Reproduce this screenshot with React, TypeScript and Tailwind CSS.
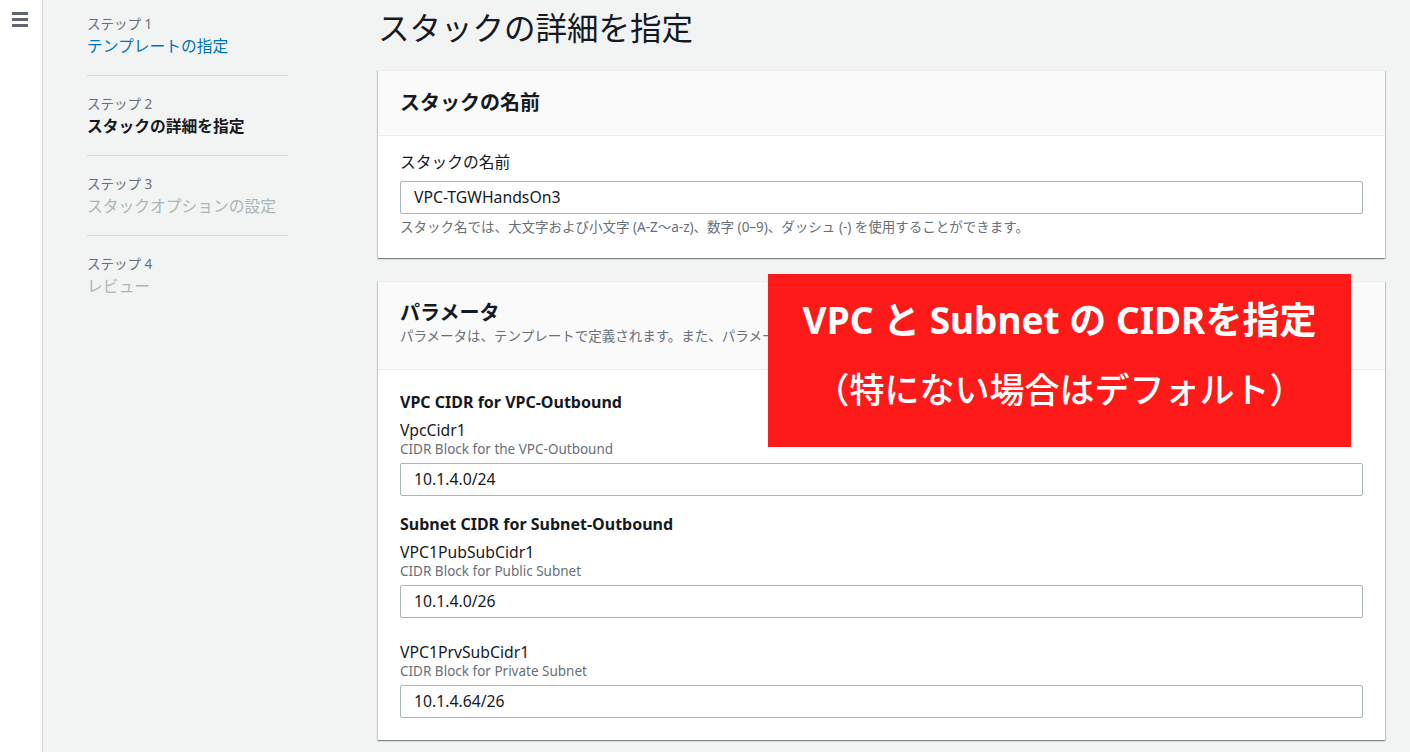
import React from "react";

const FONT = { fontFamily: '"Noto Sans", "Noto Sans CJK JP", sans-serif' };

function Step({ n, title, state, last }: { n: number; title: string; state: "done" | "current" | "todo"; last?: boolean }) {
  const titleCls =
    state === "done"
      ? "text-[#0073bb]"
      : state === "current"
      ? "text-[#16191f] font-bold"
      : "text-[#aab7b8]";
  return (
    <div className={`${n === 1 ? "pt-[14px]" : "pt-[18px]"} pb-[17px] ${last ? "" : "border-b border-[#d5dbdb]"}`}>
      <div className="text-[13.5px] leading-[20px] text-[#687078]">ステップ {n}</div>
      <div className={`text-[15.75px] leading-[24px] ${titleCls}`}>{title}</div>
    </div>
  );
}

function Input({ value }: { value: string }) {
  return (
    <div className="h-[33px] border border-[#aab7b8] rounded-[2px] bg-white flex items-center px-[13px] text-[15.75px] text-[#16191f]">
      {value}
    </div>
  );
}

function Param({ name, desc, value }: { name: string; desc: string; value: string }) {
  return (
    <div className="flex flex-col">
      <div className="text-[15.75px] leading-[20px] text-[#16191f]">{name}</div>
      <div className="text-[13.5px] leading-[18px] text-[#687078]">{desc}</div>
      <div className="mt-[5px]">
        <Input value={value} />
      </div>
    </div>
  );
}

const cardCls =
  "bg-white border-t border-[#eaeded] shadow-[0_1px_1px_0_rgba(0,28,36,0.3),1px_1px_1px_0_rgba(0,28,36,0.15),-1px_1px_1px_0_rgba(0,28,36,0.15)]";

export default function App() {
  return (
    <div className="relative w-[1410px] h-[752px] overflow-hidden bg-[#f2f3f3] flex" style={FONT}>
      {/* Left rail */}
      <div className="w-[43px] h-full bg-white border-r border-[#d5dbdb] shrink-0 pt-[12px] pl-[12px]">
        <div className="flex flex-col gap-[3px] w-[16px]">
          <div className="h-[3px] bg-[#5f6670]" />
          <div className="h-[3px] bg-[#5f6670]" />
          <div className="h-[3px] bg-[#5f6670]" />
        </div>
      </div>

      {/* Steps nav */}
      <div className="w-[201px] ml-[44px] shrink-0">
        <Step n={1} title="テンプレートの指定" state="done" />
        <Step n={2} title="スタックの詳細を指定" state="current" />
        <Step n={3} title="スタックオプションの設定" state="todo" />
        <Step n={4} title="レビュー" state="todo" last />
      </div>

      {/* Main */}
      <div className="ml-[90px] w-[1007px] shrink-0 flex flex-col">
        <h1 className="pt-[8px] h-[48px] text-[31.5px] leading-[40px] text-[#16191f] font-normal">スタックの詳細を指定</h1>

        <div className={`mt-[22px] ${cardCls}`}>
          <div className="h-[65px] bg-[#fafafa] border-b border-[#eaeded] flex items-center px-[22px]">
            <h2 className="text-[20px] font-bold text-[#16191f]">スタックの名前</h2>
          </div>
          <div className="px-[22px] pt-[15px] pb-[22px]">
            <div className="text-[15.75px] leading-[22px] text-[#16191f]">スタックの名前</div>
            <div className="mt-[8px]">
              <Input value="VPC-TGWHandsOn3" />
            </div>
            <div className="mt-[4px] text-[13.5px] leading-[18px] text-[#687078]">
              スタック名では、大文字および小文字 (A-Z〜a-z)、数字 (0–9)、ダッシュ (-) を使用することができます。
            </div>
          </div>
        </div>

        <div className={`mt-[23px] ${cardCls}`}>
          <div className="bg-[#fafafa] border-b border-[#eaeded] px-[22px] pt-[18px] pb-[23px]">
            <h2 className="text-[20px] leading-[26px] font-bold text-[#16191f]">パラメータ</h2>
            <div className="text-[13.5px] leading-[20px] text-[#687078] whitespace-nowrap">
              パラメータは、テンプレートで定義されます。また、パラメータを使用すると、スタックを作成または更新する際にカスタム値を入力できます。
            </div>
          </div>
          <div className="px-[22px] pt-[21px] pb-[22px] flex flex-col">
            <div className="text-[16px] leading-[22px] font-bold text-[#16191f]">VPC CIDR for VPC-Outbound</div>
            <div className="mt-[7px]">
              <Param name="VpcCidr1" desc="CIDR Block for the VPC-Outbound" value="10.1.4.0/24" />
            </div>
            <div className="mt-[17px] text-[16px] leading-[22px] font-bold text-[#16191f]">Subnet CIDR for Subnet-Outbound</div>
            <div className="mt-[7px]">
              <Param name="VPC1PubSubCidr1" desc="CIDR Block for Public Subnet" value="10.1.4.0/26" />
            </div>
            <div className="mt-[24px]">
              <Param name="VPC1PrvSubCidr1" desc="CIDR Block for Private Subnet" value="10.1.4.64/26" />
            </div>
          </div>
        </div>
      </div>

      {/* Annotation overlay */}
      <div className="absolute left-[768px] top-[274px] w-[583px] h-[173px] bg-[#ff1a1a] flex flex-col items-center pt-[11px] text-white">
        <div className="h-[70px] leading-[70px] text-[37px] font-bold whitespace-nowrap">VPC と Subnet の CIDRを指定</div>
        <div className="h-[70px] leading-[70px] text-[35px] font-medium whitespace-nowrap">（特にない場合はデフォルト）</div>
      </div>
    </div>
  );
}
